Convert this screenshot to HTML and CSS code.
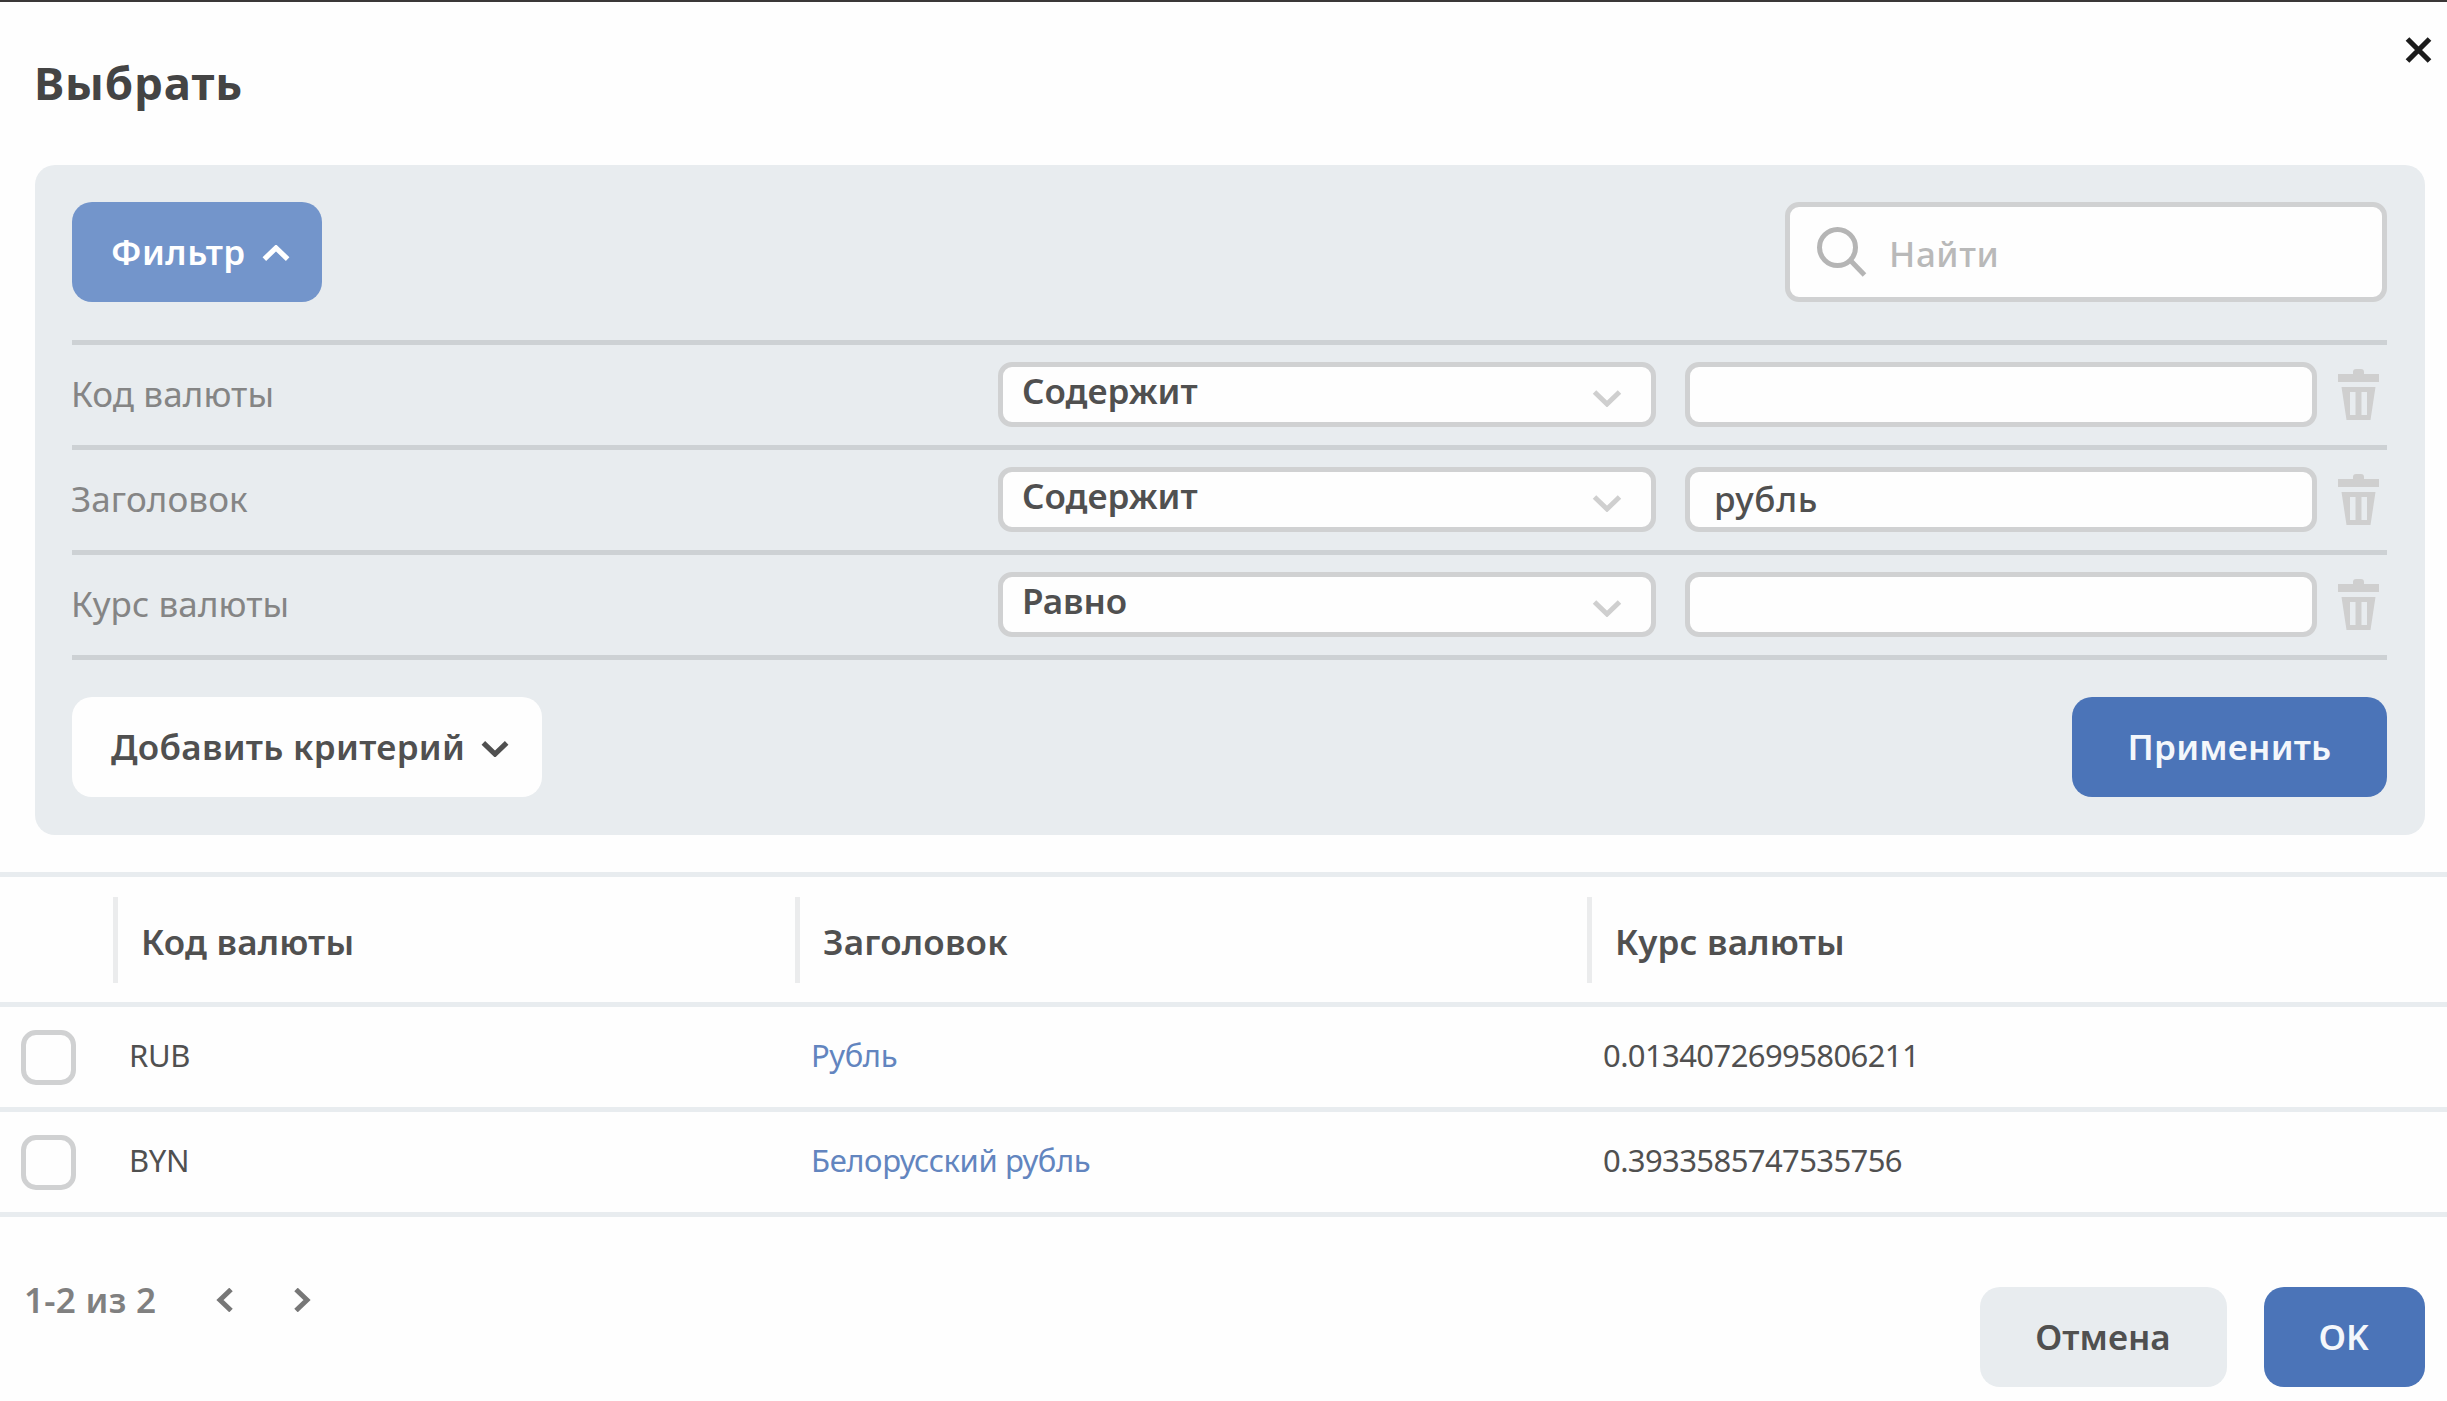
FILE: index.html
```html
<!DOCTYPE html>
<html lang="ru">
<head>
<meta charset="utf-8">
<title>Выбрать</title>
<link rel="stylesheet" href="styles.css">
</head>
<body>
<svg class="sprite" aria-hidden="true">
  <symbol id="trash" viewBox="0 0 41 51">
    <path fill-rule="evenodd" d="M15 5V3Q15 0 18 0h5q3 0 3 3v2h15v8H0V5zM3.500 18h34L32.500 51h-24zM12 23v23h5.500V23zM23.500 23v23H29V23z"/>
  </symbol>
  <symbol id="chevron" viewBox="0 0 30 18">
    <path d="M2.500 3 15 15 27.500 3"/>
  </symbol>
</svg>
<main class="dialog">
  <header class="dialog-head">
    <h1 class="title">Выбрать</h1>
    <button class="close" aria-label="Закрыть"><svg viewBox="0 0 27 26"><path d="M2.500 2 24.500 24M24.500 2 2.500 24"/></svg></button>
  </header>
  <section class="filter">
    <div class="filter-top">
      <button class="btn btn-filter"><span>Фильтр</span><svg class="chev up"><use href="#chevron"/></svg></button>
      <div class="search">
        <svg class="lens" viewBox="0 0 50 50"><circle cx="20.500" cy="20.500" r="18"/><path d="M33.500 33.500 47.500 48"/></svg>
        <span>Найти</span>
      </div>
    </div>
    <div class="criteria">
      <div class="criterion">
        <span class="label">Код валюты</span>
        <div class="select"><span>Содержит</span><svg class="arrow"><use href="#chevron"/></svg></div>
        <div class="field"></div>
        <svg class="trash"><use href="#trash"/></svg>
      </div>
      <div class="criterion">
        <span class="label">Заголовок</span>
        <div class="select"><span>Содержит</span><svg class="arrow"><use href="#chevron"/></svg></div>
        <div class="field"><span>рубль</span></div>
        <svg class="trash"><use href="#trash"/></svg>
      </div>
      <div class="criterion">
        <span class="label">Курс валюты</span>
        <div class="select"><span>Равно</span><svg class="arrow"><use href="#chevron"/></svg></div>
        <div class="field"></div>
        <svg class="trash"><use href="#trash"/></svg>
      </div>
    </div>
    <div class="filter-bottom">
      <button class="btn btn-add"><span>Добавить критерий</span><svg class="chev"><use href="#chevron"/></svg></button>
      <button class="btn btn-primary btn-apply"><span>Применить</span></button>
    </div>
  </section>
  <section class="table">
    <div class="row head">
      <div></div>
      <div class="th"><span>Код валюты</span></div>
      <div class="th"><span>Заголовок</span></div>
      <div class="th"><span>Курс валюты</span></div>
    </div>
    <div class="row">
      <div class="check"></div>
      <div class="td"><span>RUB</span></div>
      <div class="td link"><span>Рубль</span></div>
      <div class="td number"><span>0.01340726995806211</span></div>
    </div>
    <div class="row">
      <div class="check"></div>
      <div class="td"><span>BYN</span></div>
      <div class="td link"><span>Белорусский рубль</span></div>
      <div class="td number"><span>0.3933585747535756</span></div>
    </div>
  </section>
  <footer class="foot">
    <div class="pager">
      <span>1-2 из 2</span>
      <svg viewBox="0 0 18 24"><path d="M15 1.500 4 12 15 22.500"/></svg>
      <svg viewBox="0 0 18 24"><path d="M3 1.500 14 12 3 22.500"/></svg>
    </div>
    <div class="actions">
      <button class="btn btn-cancel"><span>Отмена</span></button>
      <button class="btn btn-primary btn-ok"><span>OK</span></button>
    </div>
  </footer>
</main>
</body>
</html>
```
FILE: styles.css
```css
* { box-sizing: border-box; }

body {
  margin: 0;
  background: #fefefe;
  color: #505050;
  font-family: "Noto Sans", "Open Sans", sans-serif;
  font-size: 35px;
  line-height: 48px;
  white-space: nowrap;
}

button {
  border: 0;
  padding: 0;
  background: none;
  color: inherit;
  font: inherit;
}

svg { display: block; fill: none; flex: none; }

.sprite { display: none; }

.dialog {
  height: 1401px;
  overflow: hidden;
  border-top: 2px solid #3a3838;
}

.dialog-head {
  display: flex;
  justify-content: space-between;
  height: 163px;
  padding: 35px 15px 0 34px;
}

.title {
  margin: 15px 0 0;
  font-size: 45.500px;
  line-height: 60px;
  font-weight: 700;
  letter-spacing: 0.9px;
  color: #444;
}

.close { height: 26px; }
.close svg { width: 27px; height: 26px; stroke: #1c1c1c; stroke-width: 5.200; }

.filter {
  height: 670px;
  margin: 0 22px 0 35px;
  padding: 37px 38px 0 37px;
  border-radius: 20px;
  background: #e8ecef;
}

.filter-top,
.filter-bottom {
  display: flex;
  justify-content: space-between;
}

.filter-top { height: 138px; }

.btn {
  display: flex;
  align-items: center;
  justify-content: center;
  height: 100px;
  border-radius: 20px;
  font-weight: 600;
}

.chev {
  width: 28px;
  height: 17px;
  margin-top: 3px;
  stroke: currentColor;
  stroke-width: 5.500;
}

.up { transform: rotate(180deg); }

.btn-filter {
  width: 250px;
  gap: 16px;
  justify-content: flex-start;
  padding-left: 39px;
  letter-spacing: 0.5px;
  background: #7395cb;
  color: #fff;
}

.search {
  display: flex;
  align-items: center;
  gap: 22px;
  width: 602px;
  height: 100px;
  padding-left: 27px;
  border: 5px solid #d0d1d2;
  border-radius: 14px;
  background: #fefefe;
  color: #b9b9b9;
  font-weight: 500;
  letter-spacing: 0.6px;
}

.search span { margin-top: 3px; }

.lens { width: 50px; height: 50px; stroke: #b5b5b5; stroke-width: 5; }

.criteria { border-top: 5px solid #cdd1d4; }

.criterion {
  display: grid;
  grid-template-columns: 926px 658px 661px 63px;
  align-items: center;
  height: 105px;
  border-bottom: 5px solid #cdd1d4;
}

.label { margin: -3px 0 0 -1px; color: #858585; letter-spacing: 0.1px; }

.select,
.field {
  display: flex;
  align-items: center;
  height: 65px;
  margin-top: -1px;
  border: 5px solid #d0d1d2;
  border-radius: 14px;
  background: #fefefe;
}

.select {
  justify-content: space-between;
  padding: 0 29px 0 19px;
  font-weight: 600;
}

.select span { margin-top: -7px; }

.arrow {
  width: 30px;
  height: 18px;
  margin-top: 6px;
  stroke: #cfcfcf;
  stroke-width: 5px;
}

.field {
  margin-left: 29px;
  padding-left: 24px;
  font-weight: 500;
  letter-spacing: 0.700px;
}

.field span { margin-top: -1px; }

.trash { width: 41px; height: 51px; margin: -1px 0 0 21px; fill: #cfcfcf; }

.filter-bottom { margin-top: 37px; }

.btn-add {
  width: 470px;
  gap: 16px;
  justify-content: flex-start;
  padding-left: 39px;
  letter-spacing: 0.3px;
  background: #fefefe;
}

.btn-primary { background: #4b74b8; color: #f4f7fb; }
.btn-apply { width: 315px; letter-spacing: 0.2px; }

.table { margin-top: 37px; border-top: 5px solid #e8ecef; }

.row {
  display: grid;
  grid-template-columns: 113px 682px 792px 1fr;
  align-items: center;
  height: 105px;
  border-bottom: 5px solid #e8ecef;
}

.row.head { height: 130px; font-weight: 600; }

.th {
  display: flex;
  align-items: center;
  height: 86px;
  padding: 4px 0 0 23px;
  border-left: 5px solid #ebeced;
  letter-spacing: 0.2px;
}

.td {
  margin-top: -4px;
  padding-left: 16px;
  font-size: 31px;
  letter-spacing: -0.400px;
}

.number { letter-spacing: -0.600px; }
.link { color: #6285bf; }

.check {
  width: 55px;
  height: 55px;
  margin: 0 0 0 21px;
  border: 5px solid #d0d1d2;
  border-radius: 15px;
}

.foot {
  display: flex;
  justify-content: space-between;
  padding: 70px 22px 0 24px;
}

.pager {
  display: flex;
  align-items: center;
  height: 26px;
  color: #808080;
  font-weight: 600;
  letter-spacing: 0.3px;
}

.pager svg { width: 18px; height: 24px; stroke: #777; stroke-width: 5; margin-left: 59.500px; }

.actions { display: flex; gap: 37px; }
.btn-cancel { width: 247px; padding-right: 1px; background: #e8ecef; }
.btn-ok { width: 161px; padding-right: 2px; }
```
